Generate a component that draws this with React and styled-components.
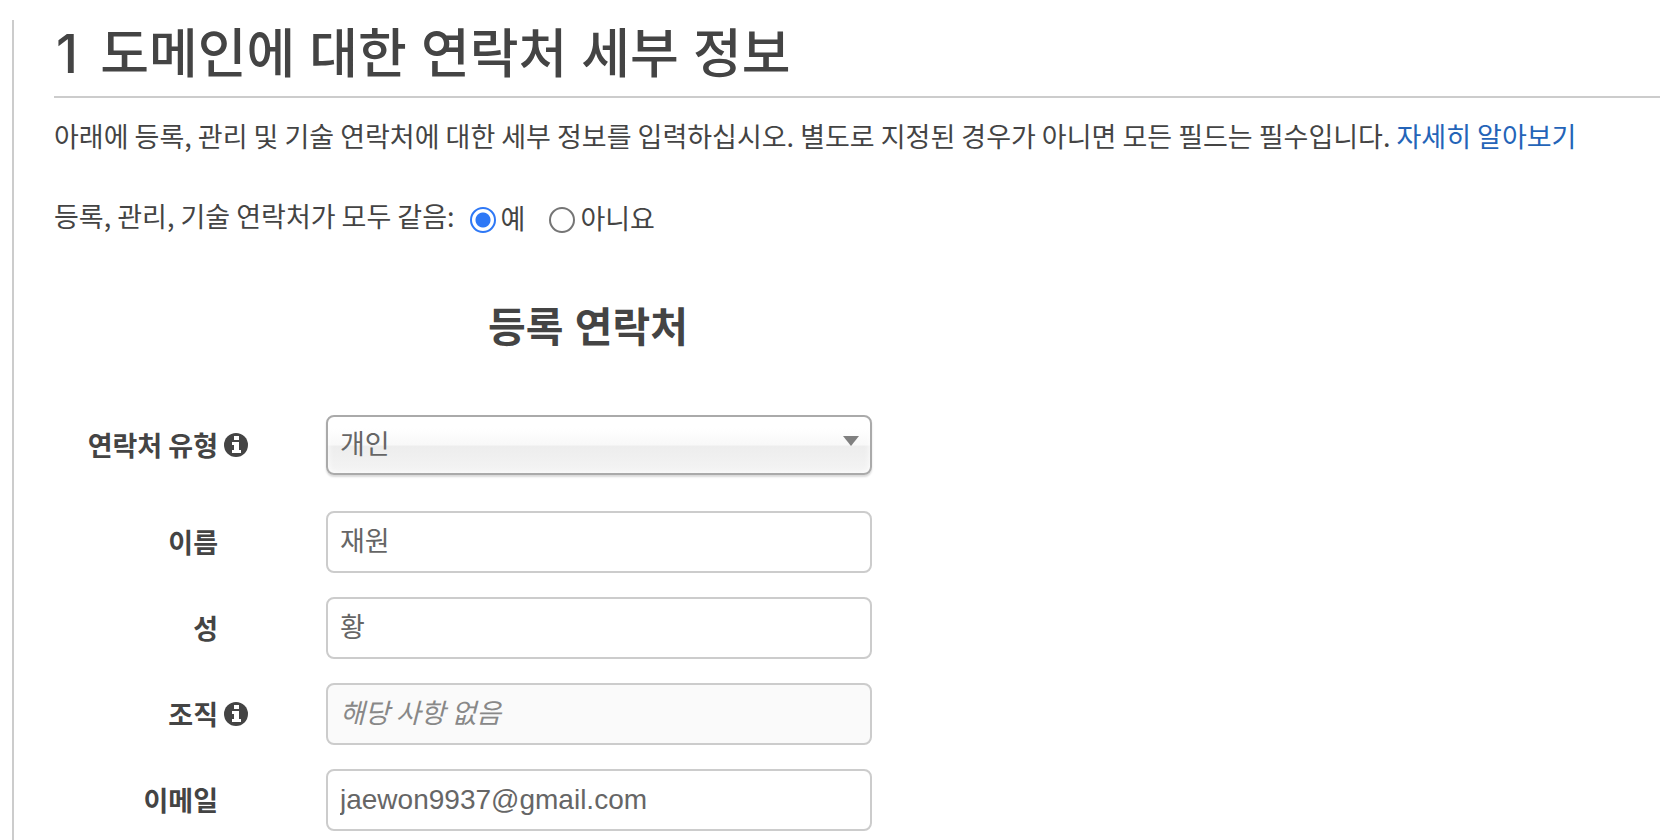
import React, { useState } from 'react'
import styled, { createGlobalStyle } from 'styled-components'

const GlobalStyle = createGlobalStyle`
  * {
    box-sizing: border-box;
  }

  body {
    margin: 0;
    background: #fff;
    color: #444;
    font-family: "Noto Sans CJK KR", "Liberation Sans", sans-serif;
    font-size: 27px;
    line-height: 40px;
  }
`;

const Page = styled.div`
  min-height: 100vh;
  padding: 20px 0 0 12px;
  display: flex;
  flex-direction: column;
`;

const Panel = styled.main`
  flex: 1;
  border-left: 2px solid #ccc;
  padding: 0 0 8px 40px;
`;

const Title = styled.h1`
  margin: 0;
  padding: 2px 0 10px;
  border-bottom: 2px solid #ccc;
  font-family: Inter, "Noto Sans CJK KR", sans-serif;
  font-size: 53px;
  font-weight: 500;
  line-height: 64px;
`;

const DomainCount = styled.span`
  margin: 0 8px 0 2px;
`;

const Intro = styled.p`
  margin: 18px 0 0;
`;

const Link = styled.a`
  color: #2464b8;
  text-decoration: none;

  &:hover {
    text-decoration: underline;
  }
`;

const RadioGroup = styled.fieldset`
  display: flex;
  align-items: flex-start;
  margin: 40px 0 0;
  padding: 0;
  border: 0;
`;

const Legend = styled.legend`
  float: left;
  padding: 0;
  margin-right: 15px;
`;

const RadioLabel = styled.label`
  display: flex;
  align-items: center;
  gap: 5px;
  margin: 2px 24px 0 0;
`;

const Radio = styled.input`
  appearance: none;
  width: 26px;
  height: 26px;
  margin: 4px 0 0;
  border: 2px solid #757575;
  border-radius: 50%;
  background: #fff;

  &:checked {
    border-color: #2e78f6;
    background: radial-gradient(circle, #2e78f6 7px, #fff 8px);
  }
`;

const Form = styled.form`
  max-width: 1068px;
  margin-top: 58px;
`;

const FormTitle = styled.h2`
  margin: 0 0 55px;
  font-family: "Liberation Sans", "Noto Sans CJK KR", sans-serif;
  font-size: 41px;
  font-weight: 700;
  line-height: 64px;
  text-align: center;
`;

const Row = styled.div`
  display: grid;
  grid-template-columns: 164px 96px minmax(0, 546px);
  align-items: center;
  column-gap: 6px;
  margin-bottom: ${props => (props.$spaced ? '36px' : '24px')};
`;

const Label = styled.label`
  font-weight: 700;
  text-align: right;
`;

const Control = styled.div`
  position: relative;
  grid-column: 3;
`;

const fieldFont = `
  display: block;
  width: 100%;
  border-radius: 8px;
  color: #666;
  font-family: inherit;
  font-size: 27px;
  line-height: 40px;
`;

const TextInput = styled.input`
  ${fieldFont}
  height: 62px;
  padding: 6px 12px 12px;
  border: 2px solid #ccc;
  background: #fff;

  &[type='email'] {
    padding: 10px 12px;
    font-family: "Liberation Sans", sans-serif;
    font-size: 28px;
  }

  &:disabled {
    background: #fafafa;
  }

  &::placeholder {
    color: #888;
    font-style: italic;
    opacity: 1;
  }
`;

const Select = styled.select`
  ${fieldFont}
  appearance: none;
  height: 60px;
  padding: 6px 48px 10px 12px;
  border: 2px solid #aaa;
  background: linear-gradient(#fff 0%, #fff 20%, #f8f8f8 50%, #ededed 52%, #f4f4f4 100%);
  box-shadow: 0 2px 2px rgba(0, 0, 0, 0.15), inset 0 0 6px #fff;
`;

const Caret = styled.svg`
  position: absolute;
  top: 21px;
  right: 13px;
  width: 16px;
  height: 10px;
  pointer-events: none;
`;

const InfoSvg = styled.svg`
  display: block;
  width: 24px;
  height: 24px;
`;

const InfoIcon = () => (
  <InfoSvg viewBox="0 0 24 24" aria-hidden="true">
    <circle cx="12" cy="12" r="12" fill="#444" />
    <path d="M10 3h5v4h-5zM8 9h7v8h2v3H8v-3h2v-5H8z" fill="#fff" />
  </InfoSvg>
)

const Field = ({ id, label, info, spaced, children }) => (
  <Row $spaced={spaced}>
    <Label htmlFor={id}>{label}</Label>
    {info && <InfoIcon />}
    <Control>{children}</Control>
  </Row>
)

const textFields = [
  { id: 'firstName', label: '이름', value: '재원' },
  { id: 'lastName', label: '성', value: '황' },
  { id: 'organization', label: '조직', info: true, disabled: true, placeholder: '해당 사항 없음' },
  { id: 'email', label: '이메일', type: 'email', value: 'jaewon9937@gmail.com' },
]

const App = () => {
  const [same, setSame] = useState('yes')

  return (
    <>
      <GlobalStyle />
      <Page>
        <Panel>
          <Title>
            <DomainCount>1</DomainCount> 도메인에 대한 연락처 세부 정보
          </Title>
          <Intro>
            아래에 등록, 관리 및 기술 연락처에 대한 세부 정보를 입력하십시오. 별도로 지정된 경우가 아니면 모든 필드는 필수입니다.{' '}
            <Link href="#learn-more">자세히 알아보기</Link>
          </Intro>

          <RadioGroup>
            <Legend>등록, 관리, 기술 연락처가 모두 같음:</Legend>
            <RadioLabel>
              <Radio type="radio" name="same" checked={same === 'yes'} onChange={() => setSame('yes')} />
              예
            </RadioLabel>
            <RadioLabel>
              <Radio type="radio" name="same" checked={same === 'no'} onChange={() => setSame('no')} />
              아니요
            </RadioLabel>
          </RadioGroup>

          <Form>
            <FormTitle>등록 연락처</FormTitle>
            <Field id="contactType" label="연락처 유형" info spaced>
              <Select id="contactType" defaultValue="person">
                <option value="person">개인</option>
                <option value="company">회사</option>
              </Select>
              <Caret viewBox="0 0 16 10" aria-hidden="true">
                <path d="M0 0h16L8 10z" fill="#808080" />
              </Caret>
            </Field>
            {textFields.map(field => (
              <Field key={field.id} id={field.id} label={field.label} info={field.info}>
                <TextInput
                  id={field.id}
                  type={field.type || 'text'}
                  defaultValue={field.value}
                  placeholder={field.placeholder}
                  disabled={field.disabled}
                />
              </Field>
            ))}
          </Form>
        </Panel>
      </Page>
    </>
  )
}

export default App
